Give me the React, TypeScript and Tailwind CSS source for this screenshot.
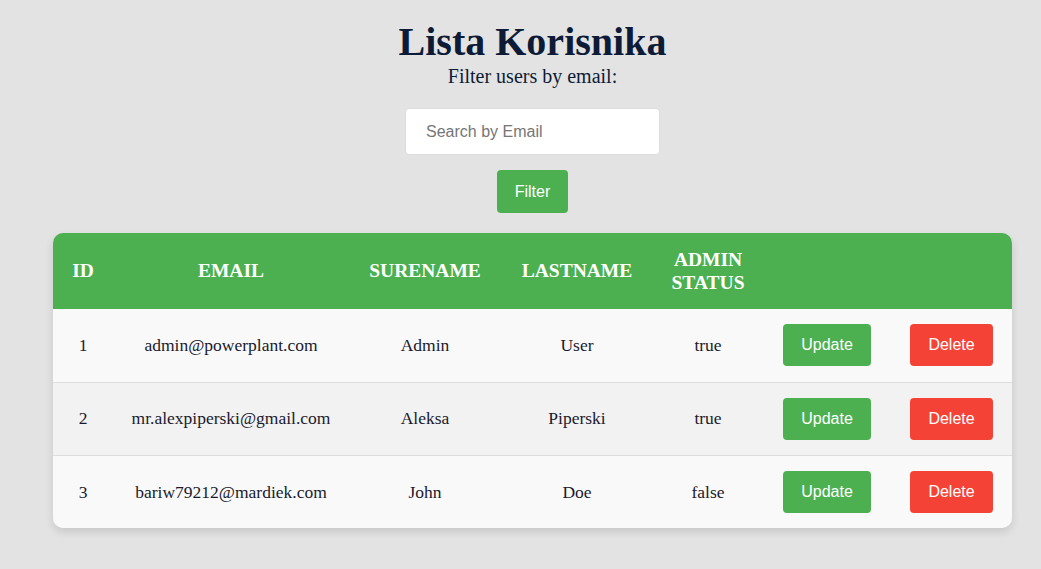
import React from 'react';

type User = { id: number; email: string; surename: string; lastname: string; admin: boolean };

const users: User[] = [
  { id: 1, email: 'admin@powerplant.com', surename: 'Admin', lastname: 'User', admin: true },
  { id: 2, email: 'mr.alexpiperski@gmail.com', surename: 'Aleksa', lastname: 'Piperski', admin: true },
  { id: 3, email: 'bariw79212@mardiek.com', surename: 'John', lastname: 'Doe', admin: false },
];

const serif = "font-['Liberation_Serif','Times_New_Roman',serif]";
const sans = "font-['Liberation_Sans',Arial,sans-serif]";

export default function App() {
  return (
    <div className={`min-h-screen bg-[#e3e3e3] pt-[19px] pb-10 ${serif}`}>
      <div className="w-[959px] ml-[53px] flex flex-col items-center">
        <h1 className="text-[40px] leading-[46px] font-bold text-[#0d1b36]">Lista Korisnika</h1>
        <p className="text-[20px] leading-[23px] text-[#0d1b36]">Filter users by email:</p>
        <input
          type="text"
          placeholder="Search by Email"
          className={`mt-[20px] w-[255px] h-[47px] bg-white rounded border border-[#dcdcdc] pl-[20px] text-[16px] text-[#333] placeholder:text-[#767676] outline-none ${sans}`}
        />
        <button className={`mt-[15px] h-[43px] px-[18px] bg-[#4caf50] text-white text-[16px] rounded ${sans}`}>
          Filter
        </button>

        <div className="mt-[20px] w-full rounded-[10px] overflow-hidden shadow-[0_4px_8px_rgba(0,0,0,0.12)]">
          <table className="w-full table-fixed text-center">
            <colgroup>
              <col className="w-[60px]" />
              <col className="w-[236px]" />
              <col className="w-[152px]" />
              <col className="w-[152px]" />
              <col className="w-[110px]" />
              <col className="w-[128px]" />
              <col className="w-[121px]" />
            </colgroup>
            <thead>
              <tr className="bg-[#4caf50] text-white h-[76px]">
                <th className="px-3 text-[19.5px] font-bold">ID</th>
                <th className="px-3 text-[19.5px] font-bold">EMAIL</th>
                <th className="px-3 text-[19.5px] font-bold">SURENAME</th>
                <th className="px-3 text-[19.5px] font-bold">LASTNAME</th>
                <th className="px-3 text-[19.5px] leading-[23px] font-bold">ADMIN STATUS</th>
                <th></th>
                <th></th>
              </tr>
            </thead>
            <tbody className="text-[17.5px] text-[#1a1a2e]">
              {users.map((u, i) => (
                <tr
                  key={u.id}
                  className={`h-[73px] ${i % 2 === 1 ? 'bg-[#f2f2f2]' : 'bg-[#f9f9f9]'} ${i < users.length - 1 ? 'border-b border-[#dddddd]' : ''}`}
                >
                  <td>{u.id}</td>
                  <td>{u.email}</td>
                  <td>{u.surename}</td>
                  <td>{u.lastname}</td>
                  <td>{u.admin ? 'true' : 'false'}</td>
                  <td>
                    <button className={`h-[42px] px-[18px] bg-[#4caf50] text-white text-[16px] rounded ${sans}`}>
                      Update
                    </button>
                  </td>
                  <td>
                    <button className={`h-[42px] px-[18px] bg-[#f44336] text-white text-[16px] rounded ${sans}`}>
                      Delete
                    </button>
                  </td>
                </tr>
              ))}
            </tbody>
          </table>
        </div>
      </div>
    </div>
  );
}
